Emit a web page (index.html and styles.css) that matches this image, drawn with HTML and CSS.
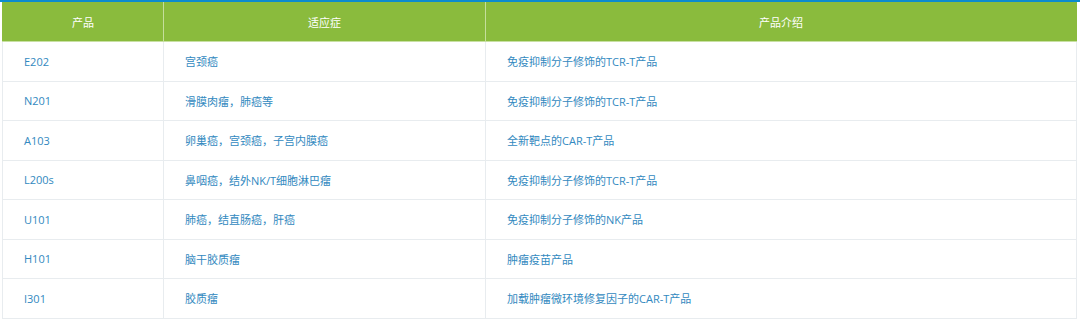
FILE: index.html
```html
<!DOCTYPE html>
<html lang="zh">
<head>
<meta charset="utf-8">
<link rel="stylesheet" href="styles.css">
</head>
<body>
<div class="wrap">
<table class="tbl">
<colgroup><col class="c1"><col class="c2"><col class="c3"></colgroup>
<thead>
<tr><th>产品</th><th>适应症</th><th>产品介绍</th></tr>
</thead>
<tbody>
<tr><td>E202</td><td>宫颈癌</td><td>免疫抑制分子修饰的TCR-T产品</td></tr>
<tr><td>N201</td><td>滑膜肉瘤，肺癌等</td><td>免疫抑制分子修饰的TCR-T产品</td></tr>
<tr><td>A103</td><td>卵巢癌，宫颈癌，子宫内膜癌</td><td>全新靶点的CAR-T产品</td></tr>
<tr><td>L200s</td><td>鼻咽癌，结外NK/T细胞淋巴瘤</td><td>免疫抑制分子修饰的TCR-T产品</td></tr>
<tr><td>U101</td><td>肺癌，结直肠癌，肝癌</td><td>免疫抑制分子修饰的NK产品</td></tr>
<tr><td>H101</td><td>脑干胶质瘤</td><td>肿瘤疫苗产品</td></tr>
<tr><td>I301</td><td>胶质瘤</td><td>加载肿瘤微环境修复因子的CAR-T产品</td></tr>
</tbody>
</table>
</div>
</body>
</html>
```
FILE: styles.css
```css
html, body {
  margin: 0;
  padding: 0;
  background: #fff;
}
.wrap {
  border-top: 2px solid #0b8bcf;
  width: 1080px;
}
.tbl {
  margin-left: 2px;
  width: 1075px;
  border-collapse: collapse;
  table-layout: fixed;
  font-family: "Open Sans", "Noto Sans CJK SC", sans-serif;
  font-size: 11px;
}
.c1 { width: 161px; }
.c2 { width: 322px; }
.c3 { width: auto; }
.tbl th {
  background: #8abb3d;
  color: #fff;
  font-weight: normal;
  height: 39px;
  padding: 0;
  border-left: 1px solid #c5de9c;
  border-right: 1px solid #c5de9c;
  border-bottom: 1px solid #c8e0a3;
  text-align: center;
}
.tbl th:first-child { border-left-color: #8abb3d; }
.tbl th:last-child { border-right-color: #8abb3d; }
.tbl td {
  color: #3289c0;
  height: 38.5px;
  padding: 0 0 0 21px;
  border: 1px solid #e8ecef;
  text-align: left;
}
```
